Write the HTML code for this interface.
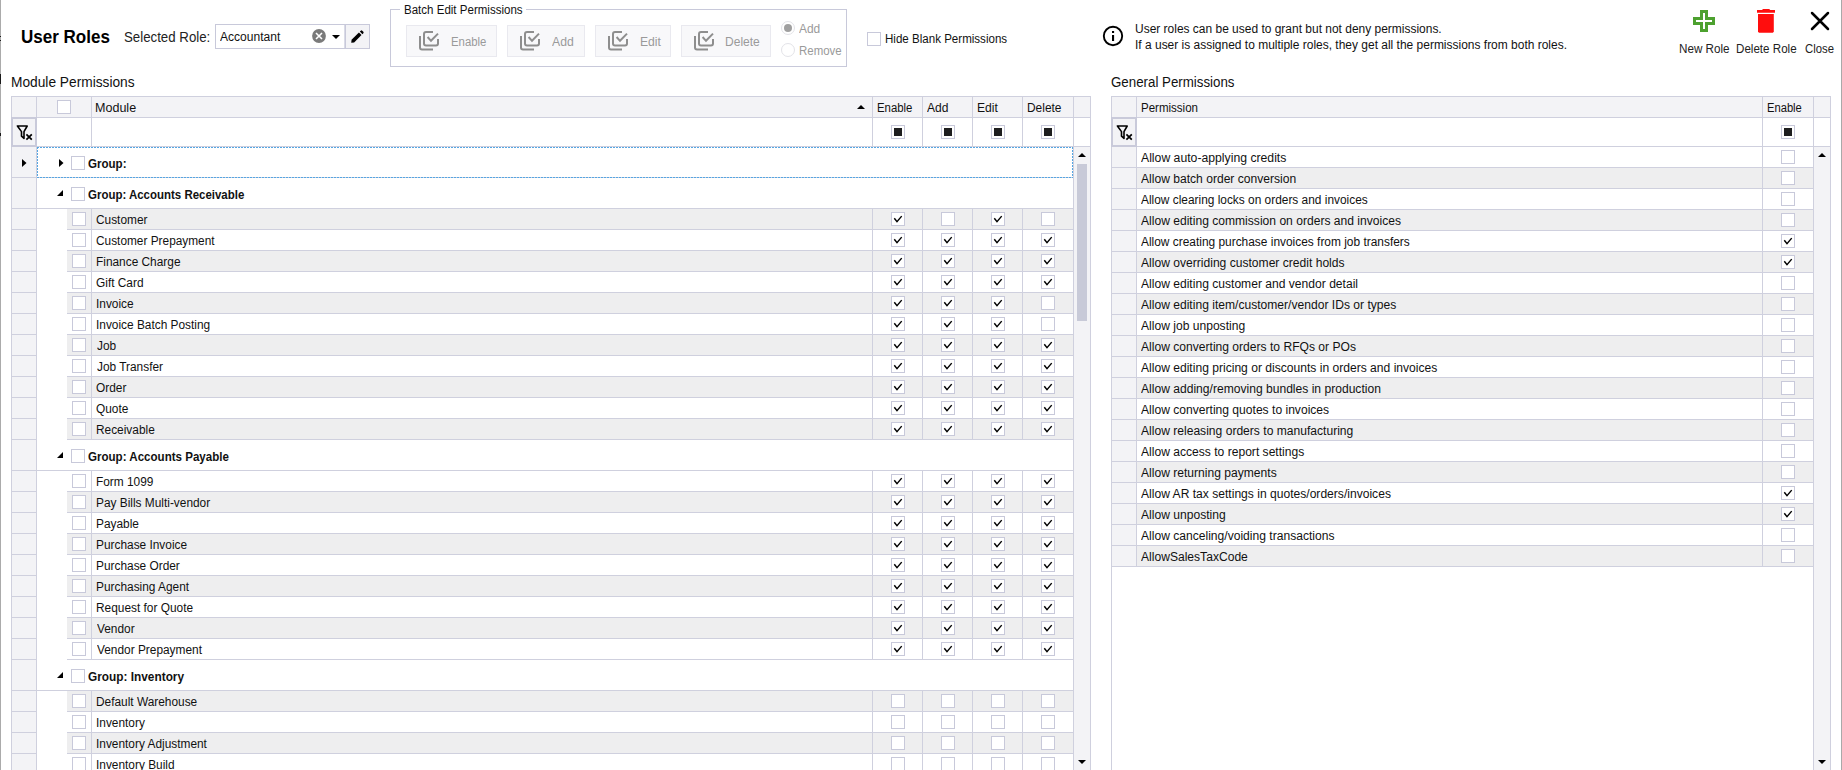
<!DOCTYPE html>
<html><head><meta charset="utf-8"><title>User Roles</title>
<style>
html,body{margin:0;padding:0;background:#fff;}
body{width:1842px;height:770px;overflow:hidden;position:relative;font-family:"Liberation Sans",sans-serif;}
div{position:absolute;box-sizing:content-box;}
.t{white-space:nowrap;line-height:1;transform-origin:0 0;}
svg{display:block;}
</style></head><body>
<div style="left:0px;top:0px;width:1px;height:770px;background:#ABABAB"></div>
<div style="left:0px;top:36px;width:1px;height:1px;background:#1A1A1A"></div>
<div style="left:0px;top:40px;width:1px;height:1px;background:#1A1A1A"></div>
<div style="left:0px;top:74px;width:1px;height:10px;background:#1A1A1A"></div>
<div style="left:0px;top:133px;width:1px;height:3px;background:#1A1A1A"></div>
<div style="left:1841px;top:0px;width:1px;height:770px;background:#A9A9A9"></div>
<div class="t" style="left:21.05px;top:28px;font-size:18px;font-weight:700;color:#000;transform:scaleX(0.9457);">User Roles</div>
<div class="t" style="left:123.74px;top:31px;font-size:13.8px;font-weight:400;color:#222;transform:scaleX(0.9614);">Selected Role:</div>
<div style="left:215px;top:24px;width:153px;height:23px;border:1px solid #C8C9DA;background:#fff"></div>
<div style="left:345px;top:25px;width:24px;height:23px;background:#F3F3F6"></div>
<div style="left:344px;top:25px;width:1px;height:23px;background:#DADBE7"></div>
<div style="left:345px;top:25px;width:1px;height:23px;background:#C8C9DA"></div>
<div class="t" style="left:220.30px;top:31px;font-size:12.5px;font-weight:400;color:#111;transform:scaleX(0.9645);">Accountant</div>
<svg style="position:absolute;left:311px;top:28px" width="16" height="16"><circle cx="8" cy="8" r="6.9" fill="#7A7A7A"/><path d="M5 5 L11 11 M11 5 L5 11" stroke="#fff" stroke-width="1.6"/></svg>
<svg style="position:absolute;left:332px;top:35px" width="8" height="4"><path d="M0 0 L4.0 4 L8 0 Z" fill="#000"/></svg>
<svg style="position:absolute;left:348px;top:28px" width="20" height="18"><g transform="translate(3.2 14.8) scale(0.92) translate(-3.2 -14.8)"><path d="M3.2 14.8 L3.6 11.6 L11.6 3.6 L14.4 6.4 L6.4 14.4 Z" fill="#000"/><path d="M12.6 2.6 L13.6 1.6 Q14.4 0.9 15.2 1.6 L16.4 2.8 Q17.1 3.6 16.4 4.4 L15.4 5.4 Z" fill="#000"/></g></svg>
<div style="left:390px;top:9px;width:455px;height:56px;border:1px solid #C8C9DA"></div>
<div style="left:400px;top:5px;width:126px;height:8px;background:#fff"></div>
<div class="t" style="left:403.68px;top:4px;font-size:12.5px;font-weight:400;color:#111;transform:scaleX(0.9228);">Batch Edit Permissions</div>
<div style="left:406px;top:25px;width:89px;height:30px;border:1px solid #E9E9EF;background:#F8F8FA"></div>
<svg width="22" height="22" style="position:absolute;left:419px;top:31px"><g fill="none" stroke="#8E8E8E" stroke-width="2"><path d="M1 5 V16.5 Q1 18.5 3 18.5 H14"/><path d="M14 1 H7 Q5 1 5 3 V12.5 Q5 14.5 7 14.5 H17 Q19 14.5 19 12.5 V8"/><path d="M8.6 6 L12 9.8 L19 2.6"/></g></svg>
<div class="t" style="left:450.59px;top:36px;font-size:12.5px;font-weight:400;color:#9A9A9A;transform:scaleX(0.9079);">Enable</div>
<div style="left:507px;top:25px;width:76px;height:30px;border:1px solid #E9E9EF;background:#F8F8FA"></div>
<svg width="22" height="22" style="position:absolute;left:520px;top:31px"><g fill="none" stroke="#8E8E8E" stroke-width="2"><path d="M1 5 V16.5 Q1 18.5 3 18.5 H14"/><path d="M14 1 H7 Q5 1 5 3 V12.5 Q5 14.5 7 14.5 H17 Q19 14.5 19 12.5 V8"/><path d="M8.6 6 L12 9.8 L19 2.6"/></g></svg>
<div class="t" style="left:552.00px;top:36px;font-size:12.5px;font-weight:400;color:#9A9A9A;transform:scaleX(0.9773);">Add</div>
<div style="left:595px;top:25px;width:74px;height:30px;border:1px solid #E9E9EF;background:#F8F8FA"></div>
<svg width="22" height="22" style="position:absolute;left:608px;top:31px"><g fill="none" stroke="#8E8E8E" stroke-width="2"><path d="M1 5 V16.5 Q1 18.5 3 18.5 H14"/><path d="M14 1 H7 Q5 1 5 3 V12.5 Q5 14.5 7 14.5 H17 Q19 14.5 19 12.5 V8"/><path d="M8.6 6 L12 9.8 L19 2.6"/></g></svg>
<div class="t" style="left:639.63px;top:36px;font-size:12.5px;font-weight:400;color:#9A9A9A;transform:scaleX(0.9700);">Edit</div>
<div style="left:681px;top:25px;width:88px;height:30px;border:1px solid #E9E9EF;background:#F8F8FA"></div>
<svg width="22" height="22" style="position:absolute;left:694px;top:31px"><g fill="none" stroke="#8E8E8E" stroke-width="2"><path d="M1 5 V16.5 Q1 18.5 3 18.5 H14"/><path d="M14 1 H7 Q5 1 5 3 V12.5 Q5 14.5 7 14.5 H17 Q19 14.5 19 12.5 V8"/><path d="M8.6 6 L12 9.8 L19 2.6"/></g></svg>
<div class="t" style="left:725.34px;top:36px;font-size:12.5px;font-weight:400;color:#9A9A9A;transform:scaleX(0.9629);">Delete</div>
<div style="left:781px;top:21px;width:12px;height:12px;border:1px solid #E3E3E8;border-radius:50%;background:#fff"><div style="left:2px;top:2px;width:8px;height:8px;border-radius:50%;background:#A0A0A0"></div></div>
<div style="left:781px;top:43px;width:12px;height:12px;border:1px solid #E3E3E8;border-radius:50%;background:#fff"></div>
<div class="t" style="left:799.30px;top:23px;font-size:12.5px;font-weight:400;color:#9A9A9A;transform:scaleX(0.9545);">Add</div>
<div class="t" style="left:798.88px;top:45px;font-size:12.5px;font-weight:400;color:#9A9A9A;transform:scaleX(0.9156);">Remove</div>
<div style="left:867px;top:32px;width:12px;height:12px;border:1px solid #C8C9DA;background:#fff"></div>
<div class="t" style="left:884.67px;top:33px;font-size:12.5px;font-weight:400;color:#111;transform:scaleX(0.9252);">Hide Blank Permissions</div>
<svg style="position:absolute;left:1102px;top:25px" width="22" height="22"><circle cx="11" cy="11" r="9.2" fill="none" stroke="#000" stroke-width="1.9"/><rect x="10" y="10" width="2.1" height="6" fill="#000"/><rect x="10" y="6" width="2.1" height="2" fill="#000"/></svg>
<div class="t" style="left:1134.84px;top:23px;font-size:12.5px;font-weight:400;color:#111;transform:scaleX(0.9575);">User roles can be used to grant but not deny permissions.</div>
<div class="t" style="left:1134.84px;top:39px;font-size:12.5px;font-weight:400;color:#111;transform:scaleX(0.9581);">If a user is assigned to multiple roles, they get all the permissions from both roles.</div>
<svg style="position:absolute;left:1692px;top:9px" width="24" height="24"><path d="M9.5 2.5 H14.5 V9.5 H21.5 V14.5 H14.5 V21.5 H9.5 V14.5 H2.5 V9.5 H9.5 Z" fill="#fff" stroke="#4DA12F" stroke-width="3"/></svg>
<svg style="position:absolute;left:1755px;top:7px" width="22" height="28"><path d="M2 2.9 H7 L8 1.9 H14.2 L15.2 2.9 H20 V5.8 H2 Z" fill="#FF0D0D"/><path d="M3 7 H18.8 V24.8 L17.8 25.8 H4 L3 24.8 Z" fill="#FF0D0D"/></svg>
<svg style="position:absolute;left:1809px;top:10px" width="22" height="22"><path d="M3 3 L19 19 M19 3 L3 19" stroke="#000" stroke-width="2.5" stroke-linecap="round"/></svg>
<div class="t" style="left:1678.77px;top:43px;font-size:12.5px;font-weight:400;color:#222;transform:scaleX(0.9340);">New Role</div>
<div class="t" style="left:1735.67px;top:43px;font-size:12.5px;font-weight:400;color:#222;transform:scaleX(0.9281);">Delete Role</div>
<div class="t" style="left:1805.09px;top:43px;font-size:12.5px;font-weight:400;color:#222;transform:scaleX(0.9065);">Close</div>
<div class="t" style="left:11.10px;top:76px;font-size:13.8px;font-weight:400;color:#111;transform:scaleX(0.9951);">Module Permissions</div>
<div class="t" style="left:1110.54px;top:76px;font-size:13.8px;font-weight:400;color:#111;transform:scaleX(0.9646);">General Permissions</div>
<div style="left:11px;top:96px;width:1079px;height:21px;background:#F3F3F6"></div>
<div style="left:11px;top:96px;width:1080px;height:1px;background:#CFD0DE"></div>
<div style="left:11px;top:117px;width:1080px;height:1px;background:#CFD0DE"></div>
<div style="left:36px;top:96px;width:1px;height:51px;background:#CFD0DE"></div>
<div style="left:91px;top:96px;width:1px;height:51px;background:#CFD0DE"></div>
<div style="left:872px;top:96px;width:1px;height:51px;background:#CFD0DE"></div>
<div style="left:922px;top:96px;width:1px;height:51px;background:#CFD0DE"></div>
<div style="left:972px;top:96px;width:1px;height:51px;background:#CFD0DE"></div>
<div style="left:1022px;top:96px;width:1px;height:51px;background:#CFD0DE"></div>
<div style="left:1073px;top:96px;width:1px;height:51px;background:#CFD0DE"></div>
<div style="left:11px;top:96px;width:1px;height:674px;background:#CFD0DE"></div>
<div style="left:1090px;top:96px;width:1px;height:674px;background:#CFD0DE"></div>
<div style="left:57px;top:100px;width:12px;height:12px;border:1px solid #C8C9DA;background:#fff"></div>
<div class="t" style="left:95.40px;top:102px;font-size:12.5px;font-weight:400;color:#111;transform:scaleX(1.0025);">Module</div>
<svg style="position:absolute;left:857px;top:105px" width="8" height="4"><path d="M0 4 L4.0 0 L8 4 Z" fill="#000"/></svg>
<div class="t" style="left:876.59px;top:102px;font-size:12.5px;font-weight:400;color:#111;transform:scaleX(0.9105);">Enable</div>
<div class="t" style="left:927.00px;top:102px;font-size:12.5px;font-weight:400;color:#111;transform:scaleX(0.9636);">Add</div>
<div class="t" style="left:976.83px;top:102px;font-size:12.5px;font-weight:400;color:#111;transform:scaleX(0.9700);">Edit</div>
<div class="t" style="left:1026.75px;top:102px;font-size:12.5px;font-weight:400;color:#111;transform:scaleX(0.9543);">Delete</div>
<div style="left:11px;top:146px;width:1080px;height:1px;background:#CFD0DE"></div>
<div style="left:11px;top:117px;width:22px;height:26px;border:2px solid #C9CADA;background:#F3F3F6"><svg width="22" height="26" style="position:absolute;left:0;top:0"><path d="M4.4 7 H14.2 L11 12.6 V19.4 L8.5 17.2 V12.6 Z" fill="none" stroke="#000" stroke-width="1.6" stroke-linejoin="round"/><path d="M13.4 15.3 L18.8 20.6 M18.8 15.3 L13.4 20.6" stroke="#000" stroke-width="1.7"/></svg></div>
<div style="left:891px;top:125px;width:12px;height:12px;border:1px solid #C8C9DA;background:#fff"><div style="left:2px;top:2px;width:8px;height:8px;background:#1E1E1E"></div></div>
<div style="left:941px;top:125px;width:12px;height:12px;border:1px solid #C8C9DA;background:#fff"><div style="left:2px;top:2px;width:8px;height:8px;background:#1E1E1E"></div></div>
<div style="left:991px;top:125px;width:12px;height:12px;border:1px solid #C8C9DA;background:#fff"><div style="left:2px;top:2px;width:8px;height:8px;background:#1E1E1E"></div></div>
<div style="left:1041px;top:125px;width:12px;height:12px;border:1px solid #C8C9DA;background:#fff"><div style="left:2px;top:2px;width:8px;height:8px;background:#1E1E1E"></div></div>
<div style="left:1074px;top:147px;width:16px;height:623px;background:#F3F3F6"></div>
<svg style="position:absolute;left:1078px;top:153px" width="8" height="4"><path d="M0 4 L4.0 0 L8 4 Z" fill="#000"/></svg>
<div style="left:1077px;top:164px;width:10px;height:157px;background:#C8CAD8"></div>
<svg style="position:absolute;left:1078px;top:760px" width="8" height="4"><path d="M0 0 L4.0 4 L8 0 Z" fill="#000"/></svg>
<div style="left:11px;top:177px;width:26px;height:1px;background:#CFD0DE"></div>
<div style="left:36px;top:177px;width:1037px;height:1px;background:#CFD0DE"></div>
<div style="left:12px;top:147px;width:24px;height:30px;background:#F3F3F6"></div>
<svg style="position:absolute;left:22px;top:159px" width="5" height="8"><path d="M0 0 L4.5 4 L0 8 Z" fill="#000"/></svg>
<svg style="position:absolute;left:59px;top:159px" width="5" height="8"><path d="M0 0 L4.5 4 L0 8 Z" fill="#000"/></svg>
<div style="left:71px;top:156px;width:12px;height:12px;border:1px solid #C8C9DA;background:#fff"></div>
<div class="t" style="left:88.40px;top:158px;font-size:12.5px;font-weight:700;color:#111;transform:scaleX(0.9250);">Group:</div>
<div style="left:11px;top:208px;width:26px;height:1px;background:#CFD0DE"></div>
<div style="left:36px;top:208px;width:1037px;height:1px;background:#CFD0DE"></div>
<div style="left:12px;top:178px;width:24px;height:30px;background:#F3F3F6"></div>
<svg style="position:absolute;left:56px;top:189px" width="8" height="8"><path d="M1 7 L7 7 L7 1 Z" fill="#000"/></svg>
<div style="left:71px;top:187px;width:12px;height:12px;border:1px solid #C8C9DA;background:#fff"></div>
<div class="t" style="left:88.40px;top:189px;font-size:12.5px;font-weight:700;color:#111;transform:scaleX(0.9171);">Group: Accounts Receivable</div>
<div style="left:67px;top:209px;width:1006px;height:20px;background:#EEEEEF"></div>
<div style="left:12px;top:209px;width:24px;height:20px;background:#F3F3F6"></div>
<div style="left:11px;top:229px;width:26px;height:1px;background:#CFD0DE"></div>
<div style="left:67px;top:229px;width:1006px;height:1px;background:#CFD0DE"></div>
<div style="left:91px;top:209px;width:1px;height:21px;background:#CFD0DE"></div>
<div style="left:872px;top:209px;width:1px;height:21px;background:#CFD0DE"></div>
<div style="left:922px;top:209px;width:1px;height:21px;background:#CFD0DE"></div>
<div style="left:972px;top:209px;width:1px;height:21px;background:#CFD0DE"></div>
<div style="left:1022px;top:209px;width:1px;height:21px;background:#CFD0DE"></div>
<div style="left:1073px;top:209px;width:1px;height:21px;background:#CFD0DE"></div>
<div style="left:72px;top:212px;width:12px;height:12px;border:1px solid #C8C9DA;background:#fff"></div>
<div class="t" style="left:95.65px;top:214px;font-size:12.5px;font-weight:400;color:#111;transform:scaleX(0.9500);">Customer</div>
<div style="left:891px;top:212px;width:12px;height:12px;border:1px solid #C8C9DA;background:#fff"><svg width="14" height="14" style="position:absolute;left:-1px;top:-1px"><path d="M3.3 6.2 L6 9.6 L10.7 4.1" fill="none" stroke="#000" stroke-width="1.45"/></svg></div>
<div style="left:941px;top:212px;width:12px;height:12px;border:1px solid #C8C9DA;background:#fff"></div>
<div style="left:991px;top:212px;width:12px;height:12px;border:1px solid #C8C9DA;background:#fff"><svg width="14" height="14" style="position:absolute;left:-1px;top:-1px"><path d="M3.3 6.2 L6 9.6 L10.7 4.1" fill="none" stroke="#000" stroke-width="1.45"/></svg></div>
<div style="left:1041px;top:212px;width:12px;height:12px;border:1px solid #C8C9DA;background:#fff"></div>
<div style="left:12px;top:230px;width:24px;height:20px;background:#F3F3F6"></div>
<div style="left:11px;top:250px;width:26px;height:1px;background:#CFD0DE"></div>
<div style="left:67px;top:250px;width:1006px;height:1px;background:#CFD0DE"></div>
<div style="left:91px;top:230px;width:1px;height:21px;background:#CFD0DE"></div>
<div style="left:872px;top:230px;width:1px;height:21px;background:#CFD0DE"></div>
<div style="left:922px;top:230px;width:1px;height:21px;background:#CFD0DE"></div>
<div style="left:972px;top:230px;width:1px;height:21px;background:#CFD0DE"></div>
<div style="left:1022px;top:230px;width:1px;height:21px;background:#CFD0DE"></div>
<div style="left:1073px;top:230px;width:1px;height:21px;background:#CFD0DE"></div>
<div style="left:72px;top:233px;width:12px;height:12px;border:1px solid #C8C9DA;background:#fff"></div>
<div class="t" style="left:95.65px;top:235px;font-size:12.5px;font-weight:400;color:#111;transform:scaleX(0.9484);">Customer Prepayment</div>
<div style="left:891px;top:233px;width:12px;height:12px;border:1px solid #C8C9DA;background:#fff"><svg width="14" height="14" style="position:absolute;left:-1px;top:-1px"><path d="M3.3 6.2 L6 9.6 L10.7 4.1" fill="none" stroke="#000" stroke-width="1.45"/></svg></div>
<div style="left:941px;top:233px;width:12px;height:12px;border:1px solid #C8C9DA;background:#fff"><svg width="14" height="14" style="position:absolute;left:-1px;top:-1px"><path d="M3.3 6.2 L6 9.6 L10.7 4.1" fill="none" stroke="#000" stroke-width="1.45"/></svg></div>
<div style="left:991px;top:233px;width:12px;height:12px;border:1px solid #C8C9DA;background:#fff"><svg width="14" height="14" style="position:absolute;left:-1px;top:-1px"><path d="M3.3 6.2 L6 9.6 L10.7 4.1" fill="none" stroke="#000" stroke-width="1.45"/></svg></div>
<div style="left:1041px;top:233px;width:12px;height:12px;border:1px solid #C8C9DA;background:#fff"><svg width="14" height="14" style="position:absolute;left:-1px;top:-1px"><path d="M3.3 6.2 L6 9.6 L10.7 4.1" fill="none" stroke="#000" stroke-width="1.45"/></svg></div>
<div style="left:67px;top:251px;width:1006px;height:20px;background:#EEEEEF"></div>
<div style="left:12px;top:251px;width:24px;height:20px;background:#F3F3F6"></div>
<div style="left:11px;top:271px;width:26px;height:1px;background:#CFD0DE"></div>
<div style="left:67px;top:271px;width:1006px;height:1px;background:#CFD0DE"></div>
<div style="left:91px;top:251px;width:1px;height:21px;background:#CFD0DE"></div>
<div style="left:872px;top:251px;width:1px;height:21px;background:#CFD0DE"></div>
<div style="left:922px;top:251px;width:1px;height:21px;background:#CFD0DE"></div>
<div style="left:972px;top:251px;width:1px;height:21px;background:#CFD0DE"></div>
<div style="left:1022px;top:251px;width:1px;height:21px;background:#CFD0DE"></div>
<div style="left:1073px;top:251px;width:1px;height:21px;background:#CFD0DE"></div>
<div style="left:72px;top:254px;width:12px;height:12px;border:1px solid #C8C9DA;background:#fff"></div>
<div class="t" style="left:95.65px;top:256px;font-size:12.5px;font-weight:400;color:#111;transform:scaleX(0.9500);">Finance Charge</div>
<div style="left:891px;top:254px;width:12px;height:12px;border:1px solid #C8C9DA;background:#fff"><svg width="14" height="14" style="position:absolute;left:-1px;top:-1px"><path d="M3.3 6.2 L6 9.6 L10.7 4.1" fill="none" stroke="#000" stroke-width="1.45"/></svg></div>
<div style="left:941px;top:254px;width:12px;height:12px;border:1px solid #C8C9DA;background:#fff"><svg width="14" height="14" style="position:absolute;left:-1px;top:-1px"><path d="M3.3 6.2 L6 9.6 L10.7 4.1" fill="none" stroke="#000" stroke-width="1.45"/></svg></div>
<div style="left:991px;top:254px;width:12px;height:12px;border:1px solid #C8C9DA;background:#fff"><svg width="14" height="14" style="position:absolute;left:-1px;top:-1px"><path d="M3.3 6.2 L6 9.6 L10.7 4.1" fill="none" stroke="#000" stroke-width="1.45"/></svg></div>
<div style="left:1041px;top:254px;width:12px;height:12px;border:1px solid #C8C9DA;background:#fff"><svg width="14" height="14" style="position:absolute;left:-1px;top:-1px"><path d="M3.3 6.2 L6 9.6 L10.7 4.1" fill="none" stroke="#000" stroke-width="1.45"/></svg></div>
<div style="left:12px;top:272px;width:24px;height:20px;background:#F3F3F6"></div>
<div style="left:11px;top:292px;width:26px;height:1px;background:#CFD0DE"></div>
<div style="left:67px;top:292px;width:1006px;height:1px;background:#CFD0DE"></div>
<div style="left:91px;top:272px;width:1px;height:21px;background:#CFD0DE"></div>
<div style="left:872px;top:272px;width:1px;height:21px;background:#CFD0DE"></div>
<div style="left:922px;top:272px;width:1px;height:21px;background:#CFD0DE"></div>
<div style="left:972px;top:272px;width:1px;height:21px;background:#CFD0DE"></div>
<div style="left:1022px;top:272px;width:1px;height:21px;background:#CFD0DE"></div>
<div style="left:1073px;top:272px;width:1px;height:21px;background:#CFD0DE"></div>
<div style="left:72px;top:275px;width:12px;height:12px;border:1px solid #C8C9DA;background:#fff"></div>
<div class="t" style="left:95.65px;top:277px;font-size:12.5px;font-weight:400;color:#111;transform:scaleX(0.9500);">Gift Card</div>
<div style="left:891px;top:275px;width:12px;height:12px;border:1px solid #C8C9DA;background:#fff"><svg width="14" height="14" style="position:absolute;left:-1px;top:-1px"><path d="M3.3 6.2 L6 9.6 L10.7 4.1" fill="none" stroke="#000" stroke-width="1.45"/></svg></div>
<div style="left:941px;top:275px;width:12px;height:12px;border:1px solid #C8C9DA;background:#fff"><svg width="14" height="14" style="position:absolute;left:-1px;top:-1px"><path d="M3.3 6.2 L6 9.6 L10.7 4.1" fill="none" stroke="#000" stroke-width="1.45"/></svg></div>
<div style="left:991px;top:275px;width:12px;height:12px;border:1px solid #C8C9DA;background:#fff"><svg width="14" height="14" style="position:absolute;left:-1px;top:-1px"><path d="M3.3 6.2 L6 9.6 L10.7 4.1" fill="none" stroke="#000" stroke-width="1.45"/></svg></div>
<div style="left:1041px;top:275px;width:12px;height:12px;border:1px solid #C8C9DA;background:#fff"><svg width="14" height="14" style="position:absolute;left:-1px;top:-1px"><path d="M3.3 6.2 L6 9.6 L10.7 4.1" fill="none" stroke="#000" stroke-width="1.45"/></svg></div>
<div style="left:67px;top:293px;width:1006px;height:20px;background:#EEEEEF"></div>
<div style="left:12px;top:293px;width:24px;height:20px;background:#F3F3F6"></div>
<div style="left:11px;top:313px;width:26px;height:1px;background:#CFD0DE"></div>
<div style="left:67px;top:313px;width:1006px;height:1px;background:#CFD0DE"></div>
<div style="left:91px;top:293px;width:1px;height:21px;background:#CFD0DE"></div>
<div style="left:872px;top:293px;width:1px;height:21px;background:#CFD0DE"></div>
<div style="left:922px;top:293px;width:1px;height:21px;background:#CFD0DE"></div>
<div style="left:972px;top:293px;width:1px;height:21px;background:#CFD0DE"></div>
<div style="left:1022px;top:293px;width:1px;height:21px;background:#CFD0DE"></div>
<div style="left:1073px;top:293px;width:1px;height:21px;background:#CFD0DE"></div>
<div style="left:72px;top:296px;width:12px;height:12px;border:1px solid #C8C9DA;background:#fff"></div>
<div class="t" style="left:95.65px;top:298px;font-size:12.5px;font-weight:400;color:#111;transform:scaleX(0.9500);">Invoice</div>
<div style="left:891px;top:296px;width:12px;height:12px;border:1px solid #C8C9DA;background:#fff"><svg width="14" height="14" style="position:absolute;left:-1px;top:-1px"><path d="M3.3 6.2 L6 9.6 L10.7 4.1" fill="none" stroke="#000" stroke-width="1.45"/></svg></div>
<div style="left:941px;top:296px;width:12px;height:12px;border:1px solid #C8C9DA;background:#fff"><svg width="14" height="14" style="position:absolute;left:-1px;top:-1px"><path d="M3.3 6.2 L6 9.6 L10.7 4.1" fill="none" stroke="#000" stroke-width="1.45"/></svg></div>
<div style="left:991px;top:296px;width:12px;height:12px;border:1px solid #C8C9DA;background:#fff"><svg width="14" height="14" style="position:absolute;left:-1px;top:-1px"><path d="M3.3 6.2 L6 9.6 L10.7 4.1" fill="none" stroke="#000" stroke-width="1.45"/></svg></div>
<div style="left:1041px;top:296px;width:12px;height:12px;border:1px solid #C8C9DA;background:#fff"></div>
<div style="left:12px;top:314px;width:24px;height:20px;background:#F3F3F6"></div>
<div style="left:11px;top:334px;width:26px;height:1px;background:#CFD0DE"></div>
<div style="left:67px;top:334px;width:1006px;height:1px;background:#CFD0DE"></div>
<div style="left:91px;top:314px;width:1px;height:21px;background:#CFD0DE"></div>
<div style="left:872px;top:314px;width:1px;height:21px;background:#CFD0DE"></div>
<div style="left:922px;top:314px;width:1px;height:21px;background:#CFD0DE"></div>
<div style="left:972px;top:314px;width:1px;height:21px;background:#CFD0DE"></div>
<div style="left:1022px;top:314px;width:1px;height:21px;background:#CFD0DE"></div>
<div style="left:1073px;top:314px;width:1px;height:21px;background:#CFD0DE"></div>
<div style="left:72px;top:317px;width:12px;height:12px;border:1px solid #C8C9DA;background:#fff"></div>
<div class="t" style="left:95.65px;top:319px;font-size:12.5px;font-weight:400;color:#111;transform:scaleX(0.9500);">Invoice Batch Posting</div>
<div style="left:891px;top:317px;width:12px;height:12px;border:1px solid #C8C9DA;background:#fff"><svg width="14" height="14" style="position:absolute;left:-1px;top:-1px"><path d="M3.3 6.2 L6 9.6 L10.7 4.1" fill="none" stroke="#000" stroke-width="1.45"/></svg></div>
<div style="left:941px;top:317px;width:12px;height:12px;border:1px solid #C8C9DA;background:#fff"><svg width="14" height="14" style="position:absolute;left:-1px;top:-1px"><path d="M3.3 6.2 L6 9.6 L10.7 4.1" fill="none" stroke="#000" stroke-width="1.45"/></svg></div>
<div style="left:991px;top:317px;width:12px;height:12px;border:1px solid #C8C9DA;background:#fff"><svg width="14" height="14" style="position:absolute;left:-1px;top:-1px"><path d="M3.3 6.2 L6 9.6 L10.7 4.1" fill="none" stroke="#000" stroke-width="1.45"/></svg></div>
<div style="left:1041px;top:317px;width:12px;height:12px;border:1px solid #C8C9DA;background:#fff"></div>
<div style="left:67px;top:335px;width:1006px;height:20px;background:#EEEEEF"></div>
<div style="left:12px;top:335px;width:24px;height:20px;background:#F3F3F6"></div>
<div style="left:11px;top:355px;width:26px;height:1px;background:#CFD0DE"></div>
<div style="left:67px;top:355px;width:1006px;height:1px;background:#CFD0DE"></div>
<div style="left:91px;top:335px;width:1px;height:21px;background:#CFD0DE"></div>
<div style="left:872px;top:335px;width:1px;height:21px;background:#CFD0DE"></div>
<div style="left:922px;top:335px;width:1px;height:21px;background:#CFD0DE"></div>
<div style="left:972px;top:335px;width:1px;height:21px;background:#CFD0DE"></div>
<div style="left:1022px;top:335px;width:1px;height:21px;background:#CFD0DE"></div>
<div style="left:1073px;top:335px;width:1px;height:21px;background:#CFD0DE"></div>
<div style="left:72px;top:338px;width:12px;height:12px;border:1px solid #C8C9DA;background:#fff"></div>
<div class="t" style="left:96.60px;top:340px;font-size:12.5px;font-weight:400;color:#111;transform:scaleX(0.9500);">Job</div>
<div style="left:891px;top:338px;width:12px;height:12px;border:1px solid #C8C9DA;background:#fff"><svg width="14" height="14" style="position:absolute;left:-1px;top:-1px"><path d="M3.3 6.2 L6 9.6 L10.7 4.1" fill="none" stroke="#000" stroke-width="1.45"/></svg></div>
<div style="left:941px;top:338px;width:12px;height:12px;border:1px solid #C8C9DA;background:#fff"><svg width="14" height="14" style="position:absolute;left:-1px;top:-1px"><path d="M3.3 6.2 L6 9.6 L10.7 4.1" fill="none" stroke="#000" stroke-width="1.45"/></svg></div>
<div style="left:991px;top:338px;width:12px;height:12px;border:1px solid #C8C9DA;background:#fff"><svg width="14" height="14" style="position:absolute;left:-1px;top:-1px"><path d="M3.3 6.2 L6 9.6 L10.7 4.1" fill="none" stroke="#000" stroke-width="1.45"/></svg></div>
<div style="left:1041px;top:338px;width:12px;height:12px;border:1px solid #C8C9DA;background:#fff"><svg width="14" height="14" style="position:absolute;left:-1px;top:-1px"><path d="M3.3 6.2 L6 9.6 L10.7 4.1" fill="none" stroke="#000" stroke-width="1.45"/></svg></div>
<div style="left:12px;top:356px;width:24px;height:20px;background:#F3F3F6"></div>
<div style="left:11px;top:376px;width:26px;height:1px;background:#CFD0DE"></div>
<div style="left:67px;top:376px;width:1006px;height:1px;background:#CFD0DE"></div>
<div style="left:91px;top:356px;width:1px;height:21px;background:#CFD0DE"></div>
<div style="left:872px;top:356px;width:1px;height:21px;background:#CFD0DE"></div>
<div style="left:922px;top:356px;width:1px;height:21px;background:#CFD0DE"></div>
<div style="left:972px;top:356px;width:1px;height:21px;background:#CFD0DE"></div>
<div style="left:1022px;top:356px;width:1px;height:21px;background:#CFD0DE"></div>
<div style="left:1073px;top:356px;width:1px;height:21px;background:#CFD0DE"></div>
<div style="left:72px;top:359px;width:12px;height:12px;border:1px solid #C8C9DA;background:#fff"></div>
<div class="t" style="left:96.60px;top:361px;font-size:12.5px;font-weight:400;color:#111;transform:scaleX(0.9500);">Job Transfer</div>
<div style="left:891px;top:359px;width:12px;height:12px;border:1px solid #C8C9DA;background:#fff"><svg width="14" height="14" style="position:absolute;left:-1px;top:-1px"><path d="M3.3 6.2 L6 9.6 L10.7 4.1" fill="none" stroke="#000" stroke-width="1.45"/></svg></div>
<div style="left:941px;top:359px;width:12px;height:12px;border:1px solid #C8C9DA;background:#fff"><svg width="14" height="14" style="position:absolute;left:-1px;top:-1px"><path d="M3.3 6.2 L6 9.6 L10.7 4.1" fill="none" stroke="#000" stroke-width="1.45"/></svg></div>
<div style="left:991px;top:359px;width:12px;height:12px;border:1px solid #C8C9DA;background:#fff"><svg width="14" height="14" style="position:absolute;left:-1px;top:-1px"><path d="M3.3 6.2 L6 9.6 L10.7 4.1" fill="none" stroke="#000" stroke-width="1.45"/></svg></div>
<div style="left:1041px;top:359px;width:12px;height:12px;border:1px solid #C8C9DA;background:#fff"><svg width="14" height="14" style="position:absolute;left:-1px;top:-1px"><path d="M3.3 6.2 L6 9.6 L10.7 4.1" fill="none" stroke="#000" stroke-width="1.45"/></svg></div>
<div style="left:67px;top:377px;width:1006px;height:20px;background:#EEEEEF"></div>
<div style="left:12px;top:377px;width:24px;height:20px;background:#F3F3F6"></div>
<div style="left:11px;top:397px;width:26px;height:1px;background:#CFD0DE"></div>
<div style="left:67px;top:397px;width:1006px;height:1px;background:#CFD0DE"></div>
<div style="left:91px;top:377px;width:1px;height:21px;background:#CFD0DE"></div>
<div style="left:872px;top:377px;width:1px;height:21px;background:#CFD0DE"></div>
<div style="left:922px;top:377px;width:1px;height:21px;background:#CFD0DE"></div>
<div style="left:972px;top:377px;width:1px;height:21px;background:#CFD0DE"></div>
<div style="left:1022px;top:377px;width:1px;height:21px;background:#CFD0DE"></div>
<div style="left:1073px;top:377px;width:1px;height:21px;background:#CFD0DE"></div>
<div style="left:72px;top:380px;width:12px;height:12px;border:1px solid #C8C9DA;background:#fff"></div>
<div class="t" style="left:95.65px;top:382px;font-size:12.5px;font-weight:400;color:#111;transform:scaleX(0.9500);">Order</div>
<div style="left:891px;top:380px;width:12px;height:12px;border:1px solid #C8C9DA;background:#fff"><svg width="14" height="14" style="position:absolute;left:-1px;top:-1px"><path d="M3.3 6.2 L6 9.6 L10.7 4.1" fill="none" stroke="#000" stroke-width="1.45"/></svg></div>
<div style="left:941px;top:380px;width:12px;height:12px;border:1px solid #C8C9DA;background:#fff"><svg width="14" height="14" style="position:absolute;left:-1px;top:-1px"><path d="M3.3 6.2 L6 9.6 L10.7 4.1" fill="none" stroke="#000" stroke-width="1.45"/></svg></div>
<div style="left:991px;top:380px;width:12px;height:12px;border:1px solid #C8C9DA;background:#fff"><svg width="14" height="14" style="position:absolute;left:-1px;top:-1px"><path d="M3.3 6.2 L6 9.6 L10.7 4.1" fill="none" stroke="#000" stroke-width="1.45"/></svg></div>
<div style="left:1041px;top:380px;width:12px;height:12px;border:1px solid #C8C9DA;background:#fff"><svg width="14" height="14" style="position:absolute;left:-1px;top:-1px"><path d="M3.3 6.2 L6 9.6 L10.7 4.1" fill="none" stroke="#000" stroke-width="1.45"/></svg></div>
<div style="left:12px;top:398px;width:24px;height:20px;background:#F3F3F6"></div>
<div style="left:11px;top:418px;width:26px;height:1px;background:#CFD0DE"></div>
<div style="left:67px;top:418px;width:1006px;height:1px;background:#CFD0DE"></div>
<div style="left:91px;top:398px;width:1px;height:21px;background:#CFD0DE"></div>
<div style="left:872px;top:398px;width:1px;height:21px;background:#CFD0DE"></div>
<div style="left:922px;top:398px;width:1px;height:21px;background:#CFD0DE"></div>
<div style="left:972px;top:398px;width:1px;height:21px;background:#CFD0DE"></div>
<div style="left:1022px;top:398px;width:1px;height:21px;background:#CFD0DE"></div>
<div style="left:1073px;top:398px;width:1px;height:21px;background:#CFD0DE"></div>
<div style="left:72px;top:401px;width:12px;height:12px;border:1px solid #C8C9DA;background:#fff"></div>
<div class="t" style="left:95.65px;top:403px;font-size:12.5px;font-weight:400;color:#111;transform:scaleX(0.9500);">Quote</div>
<div style="left:891px;top:401px;width:12px;height:12px;border:1px solid #C8C9DA;background:#fff"><svg width="14" height="14" style="position:absolute;left:-1px;top:-1px"><path d="M3.3 6.2 L6 9.6 L10.7 4.1" fill="none" stroke="#000" stroke-width="1.45"/></svg></div>
<div style="left:941px;top:401px;width:12px;height:12px;border:1px solid #C8C9DA;background:#fff"><svg width="14" height="14" style="position:absolute;left:-1px;top:-1px"><path d="M3.3 6.2 L6 9.6 L10.7 4.1" fill="none" stroke="#000" stroke-width="1.45"/></svg></div>
<div style="left:991px;top:401px;width:12px;height:12px;border:1px solid #C8C9DA;background:#fff"><svg width="14" height="14" style="position:absolute;left:-1px;top:-1px"><path d="M3.3 6.2 L6 9.6 L10.7 4.1" fill="none" stroke="#000" stroke-width="1.45"/></svg></div>
<div style="left:1041px;top:401px;width:12px;height:12px;border:1px solid #C8C9DA;background:#fff"><svg width="14" height="14" style="position:absolute;left:-1px;top:-1px"><path d="M3.3 6.2 L6 9.6 L10.7 4.1" fill="none" stroke="#000" stroke-width="1.45"/></svg></div>
<div style="left:67px;top:419px;width:1006px;height:20px;background:#EEEEEF"></div>
<div style="left:12px;top:419px;width:24px;height:20px;background:#F3F3F6"></div>
<div style="left:11px;top:439px;width:26px;height:1px;background:#CFD0DE"></div>
<div style="left:67px;top:439px;width:1006px;height:1px;background:#CFD0DE"></div>
<div style="left:91px;top:419px;width:1px;height:21px;background:#CFD0DE"></div>
<div style="left:872px;top:419px;width:1px;height:21px;background:#CFD0DE"></div>
<div style="left:922px;top:419px;width:1px;height:21px;background:#CFD0DE"></div>
<div style="left:972px;top:419px;width:1px;height:21px;background:#CFD0DE"></div>
<div style="left:1022px;top:419px;width:1px;height:21px;background:#CFD0DE"></div>
<div style="left:1073px;top:419px;width:1px;height:21px;background:#CFD0DE"></div>
<div style="left:72px;top:422px;width:12px;height:12px;border:1px solid #C8C9DA;background:#fff"></div>
<div class="t" style="left:95.65px;top:424px;font-size:12.5px;font-weight:400;color:#111;transform:scaleX(0.9500);">Receivable</div>
<div style="left:891px;top:422px;width:12px;height:12px;border:1px solid #C8C9DA;background:#fff"><svg width="14" height="14" style="position:absolute;left:-1px;top:-1px"><path d="M3.3 6.2 L6 9.6 L10.7 4.1" fill="none" stroke="#000" stroke-width="1.45"/></svg></div>
<div style="left:941px;top:422px;width:12px;height:12px;border:1px solid #C8C9DA;background:#fff"><svg width="14" height="14" style="position:absolute;left:-1px;top:-1px"><path d="M3.3 6.2 L6 9.6 L10.7 4.1" fill="none" stroke="#000" stroke-width="1.45"/></svg></div>
<div style="left:991px;top:422px;width:12px;height:12px;border:1px solid #C8C9DA;background:#fff"><svg width="14" height="14" style="position:absolute;left:-1px;top:-1px"><path d="M3.3 6.2 L6 9.6 L10.7 4.1" fill="none" stroke="#000" stroke-width="1.45"/></svg></div>
<div style="left:1041px;top:422px;width:12px;height:12px;border:1px solid #C8C9DA;background:#fff"><svg width="14" height="14" style="position:absolute;left:-1px;top:-1px"><path d="M3.3 6.2 L6 9.6 L10.7 4.1" fill="none" stroke="#000" stroke-width="1.45"/></svg></div>
<div style="left:11px;top:470px;width:26px;height:1px;background:#CFD0DE"></div>
<div style="left:36px;top:470px;width:1037px;height:1px;background:#CFD0DE"></div>
<div style="left:12px;top:440px;width:24px;height:30px;background:#F3F3F6"></div>
<svg style="position:absolute;left:56px;top:451px" width="8" height="8"><path d="M1 7 L7 7 L7 1 Z" fill="#000"/></svg>
<div style="left:71px;top:449px;width:12px;height:12px;border:1px solid #C8C9DA;background:#fff"></div>
<div class="t" style="left:88.40px;top:451px;font-size:12.5px;font-weight:700;color:#111;transform:scaleX(0.9250);">Group: Accounts Payable</div>
<div style="left:12px;top:471px;width:24px;height:20px;background:#F3F3F6"></div>
<div style="left:11px;top:491px;width:26px;height:1px;background:#CFD0DE"></div>
<div style="left:67px;top:491px;width:1006px;height:1px;background:#CFD0DE"></div>
<div style="left:91px;top:471px;width:1px;height:21px;background:#CFD0DE"></div>
<div style="left:872px;top:471px;width:1px;height:21px;background:#CFD0DE"></div>
<div style="left:922px;top:471px;width:1px;height:21px;background:#CFD0DE"></div>
<div style="left:972px;top:471px;width:1px;height:21px;background:#CFD0DE"></div>
<div style="left:1022px;top:471px;width:1px;height:21px;background:#CFD0DE"></div>
<div style="left:1073px;top:471px;width:1px;height:21px;background:#CFD0DE"></div>
<div style="left:72px;top:474px;width:12px;height:12px;border:1px solid #C8C9DA;background:#fff"></div>
<div class="t" style="left:95.65px;top:476px;font-size:12.5px;font-weight:400;color:#111;transform:scaleX(0.9500);">Form 1099</div>
<div style="left:891px;top:474px;width:12px;height:12px;border:1px solid #C8C9DA;background:#fff"><svg width="14" height="14" style="position:absolute;left:-1px;top:-1px"><path d="M3.3 6.2 L6 9.6 L10.7 4.1" fill="none" stroke="#000" stroke-width="1.45"/></svg></div>
<div style="left:941px;top:474px;width:12px;height:12px;border:1px solid #C8C9DA;background:#fff"><svg width="14" height="14" style="position:absolute;left:-1px;top:-1px"><path d="M3.3 6.2 L6 9.6 L10.7 4.1" fill="none" stroke="#000" stroke-width="1.45"/></svg></div>
<div style="left:991px;top:474px;width:12px;height:12px;border:1px solid #C8C9DA;background:#fff"><svg width="14" height="14" style="position:absolute;left:-1px;top:-1px"><path d="M3.3 6.2 L6 9.6 L10.7 4.1" fill="none" stroke="#000" stroke-width="1.45"/></svg></div>
<div style="left:1041px;top:474px;width:12px;height:12px;border:1px solid #C8C9DA;background:#fff"><svg width="14" height="14" style="position:absolute;left:-1px;top:-1px"><path d="M3.3 6.2 L6 9.6 L10.7 4.1" fill="none" stroke="#000" stroke-width="1.45"/></svg></div>
<div style="left:67px;top:492px;width:1006px;height:20px;background:#EEEEEF"></div>
<div style="left:12px;top:492px;width:24px;height:20px;background:#F3F3F6"></div>
<div style="left:11px;top:512px;width:26px;height:1px;background:#CFD0DE"></div>
<div style="left:67px;top:512px;width:1006px;height:1px;background:#CFD0DE"></div>
<div style="left:91px;top:492px;width:1px;height:21px;background:#CFD0DE"></div>
<div style="left:872px;top:492px;width:1px;height:21px;background:#CFD0DE"></div>
<div style="left:922px;top:492px;width:1px;height:21px;background:#CFD0DE"></div>
<div style="left:972px;top:492px;width:1px;height:21px;background:#CFD0DE"></div>
<div style="left:1022px;top:492px;width:1px;height:21px;background:#CFD0DE"></div>
<div style="left:1073px;top:492px;width:1px;height:21px;background:#CFD0DE"></div>
<div style="left:72px;top:495px;width:12px;height:12px;border:1px solid #C8C9DA;background:#fff"></div>
<div class="t" style="left:95.65px;top:497px;font-size:12.5px;font-weight:400;color:#111;transform:scaleX(0.9500);">Pay Bills Multi-vendor</div>
<div style="left:891px;top:495px;width:12px;height:12px;border:1px solid #C8C9DA;background:#fff"><svg width="14" height="14" style="position:absolute;left:-1px;top:-1px"><path d="M3.3 6.2 L6 9.6 L10.7 4.1" fill="none" stroke="#000" stroke-width="1.45"/></svg></div>
<div style="left:941px;top:495px;width:12px;height:12px;border:1px solid #C8C9DA;background:#fff"><svg width="14" height="14" style="position:absolute;left:-1px;top:-1px"><path d="M3.3 6.2 L6 9.6 L10.7 4.1" fill="none" stroke="#000" stroke-width="1.45"/></svg></div>
<div style="left:991px;top:495px;width:12px;height:12px;border:1px solid #C8C9DA;background:#fff"><svg width="14" height="14" style="position:absolute;left:-1px;top:-1px"><path d="M3.3 6.2 L6 9.6 L10.7 4.1" fill="none" stroke="#000" stroke-width="1.45"/></svg></div>
<div style="left:1041px;top:495px;width:12px;height:12px;border:1px solid #C8C9DA;background:#fff"><svg width="14" height="14" style="position:absolute;left:-1px;top:-1px"><path d="M3.3 6.2 L6 9.6 L10.7 4.1" fill="none" stroke="#000" stroke-width="1.45"/></svg></div>
<div style="left:12px;top:513px;width:24px;height:20px;background:#F3F3F6"></div>
<div style="left:11px;top:533px;width:26px;height:1px;background:#CFD0DE"></div>
<div style="left:67px;top:533px;width:1006px;height:1px;background:#CFD0DE"></div>
<div style="left:91px;top:513px;width:1px;height:21px;background:#CFD0DE"></div>
<div style="left:872px;top:513px;width:1px;height:21px;background:#CFD0DE"></div>
<div style="left:922px;top:513px;width:1px;height:21px;background:#CFD0DE"></div>
<div style="left:972px;top:513px;width:1px;height:21px;background:#CFD0DE"></div>
<div style="left:1022px;top:513px;width:1px;height:21px;background:#CFD0DE"></div>
<div style="left:1073px;top:513px;width:1px;height:21px;background:#CFD0DE"></div>
<div style="left:72px;top:516px;width:12px;height:12px;border:1px solid #C8C9DA;background:#fff"></div>
<div class="t" style="left:95.65px;top:518px;font-size:12.5px;font-weight:400;color:#111;transform:scaleX(0.9500);">Payable</div>
<div style="left:891px;top:516px;width:12px;height:12px;border:1px solid #C8C9DA;background:#fff"><svg width="14" height="14" style="position:absolute;left:-1px;top:-1px"><path d="M3.3 6.2 L6 9.6 L10.7 4.1" fill="none" stroke="#000" stroke-width="1.45"/></svg></div>
<div style="left:941px;top:516px;width:12px;height:12px;border:1px solid #C8C9DA;background:#fff"><svg width="14" height="14" style="position:absolute;left:-1px;top:-1px"><path d="M3.3 6.2 L6 9.6 L10.7 4.1" fill="none" stroke="#000" stroke-width="1.45"/></svg></div>
<div style="left:991px;top:516px;width:12px;height:12px;border:1px solid #C8C9DA;background:#fff"><svg width="14" height="14" style="position:absolute;left:-1px;top:-1px"><path d="M3.3 6.2 L6 9.6 L10.7 4.1" fill="none" stroke="#000" stroke-width="1.45"/></svg></div>
<div style="left:1041px;top:516px;width:12px;height:12px;border:1px solid #C8C9DA;background:#fff"><svg width="14" height="14" style="position:absolute;left:-1px;top:-1px"><path d="M3.3 6.2 L6 9.6 L10.7 4.1" fill="none" stroke="#000" stroke-width="1.45"/></svg></div>
<div style="left:67px;top:534px;width:1006px;height:20px;background:#EEEEEF"></div>
<div style="left:12px;top:534px;width:24px;height:20px;background:#F3F3F6"></div>
<div style="left:11px;top:554px;width:26px;height:1px;background:#CFD0DE"></div>
<div style="left:67px;top:554px;width:1006px;height:1px;background:#CFD0DE"></div>
<div style="left:91px;top:534px;width:1px;height:21px;background:#CFD0DE"></div>
<div style="left:872px;top:534px;width:1px;height:21px;background:#CFD0DE"></div>
<div style="left:922px;top:534px;width:1px;height:21px;background:#CFD0DE"></div>
<div style="left:972px;top:534px;width:1px;height:21px;background:#CFD0DE"></div>
<div style="left:1022px;top:534px;width:1px;height:21px;background:#CFD0DE"></div>
<div style="left:1073px;top:534px;width:1px;height:21px;background:#CFD0DE"></div>
<div style="left:72px;top:537px;width:12px;height:12px;border:1px solid #C8C9DA;background:#fff"></div>
<div class="t" style="left:95.65px;top:539px;font-size:12.5px;font-weight:400;color:#111;transform:scaleX(0.9500);">Purchase Invoice</div>
<div style="left:891px;top:537px;width:12px;height:12px;border:1px solid #C8C9DA;background:#fff"><svg width="14" height="14" style="position:absolute;left:-1px;top:-1px"><path d="M3.3 6.2 L6 9.6 L10.7 4.1" fill="none" stroke="#000" stroke-width="1.45"/></svg></div>
<div style="left:941px;top:537px;width:12px;height:12px;border:1px solid #C8C9DA;background:#fff"><svg width="14" height="14" style="position:absolute;left:-1px;top:-1px"><path d="M3.3 6.2 L6 9.6 L10.7 4.1" fill="none" stroke="#000" stroke-width="1.45"/></svg></div>
<div style="left:991px;top:537px;width:12px;height:12px;border:1px solid #C8C9DA;background:#fff"><svg width="14" height="14" style="position:absolute;left:-1px;top:-1px"><path d="M3.3 6.2 L6 9.6 L10.7 4.1" fill="none" stroke="#000" stroke-width="1.45"/></svg></div>
<div style="left:1041px;top:537px;width:12px;height:12px;border:1px solid #C8C9DA;background:#fff"><svg width="14" height="14" style="position:absolute;left:-1px;top:-1px"><path d="M3.3 6.2 L6 9.6 L10.7 4.1" fill="none" stroke="#000" stroke-width="1.45"/></svg></div>
<div style="left:12px;top:555px;width:24px;height:20px;background:#F3F3F6"></div>
<div style="left:11px;top:575px;width:26px;height:1px;background:#CFD0DE"></div>
<div style="left:67px;top:575px;width:1006px;height:1px;background:#CFD0DE"></div>
<div style="left:91px;top:555px;width:1px;height:21px;background:#CFD0DE"></div>
<div style="left:872px;top:555px;width:1px;height:21px;background:#CFD0DE"></div>
<div style="left:922px;top:555px;width:1px;height:21px;background:#CFD0DE"></div>
<div style="left:972px;top:555px;width:1px;height:21px;background:#CFD0DE"></div>
<div style="left:1022px;top:555px;width:1px;height:21px;background:#CFD0DE"></div>
<div style="left:1073px;top:555px;width:1px;height:21px;background:#CFD0DE"></div>
<div style="left:72px;top:558px;width:12px;height:12px;border:1px solid #C8C9DA;background:#fff"></div>
<div class="t" style="left:95.65px;top:560px;font-size:12.5px;font-weight:400;color:#111;transform:scaleX(0.9500);">Purchase Order</div>
<div style="left:891px;top:558px;width:12px;height:12px;border:1px solid #C8C9DA;background:#fff"><svg width="14" height="14" style="position:absolute;left:-1px;top:-1px"><path d="M3.3 6.2 L6 9.6 L10.7 4.1" fill="none" stroke="#000" stroke-width="1.45"/></svg></div>
<div style="left:941px;top:558px;width:12px;height:12px;border:1px solid #C8C9DA;background:#fff"><svg width="14" height="14" style="position:absolute;left:-1px;top:-1px"><path d="M3.3 6.2 L6 9.6 L10.7 4.1" fill="none" stroke="#000" stroke-width="1.45"/></svg></div>
<div style="left:991px;top:558px;width:12px;height:12px;border:1px solid #C8C9DA;background:#fff"><svg width="14" height="14" style="position:absolute;left:-1px;top:-1px"><path d="M3.3 6.2 L6 9.6 L10.7 4.1" fill="none" stroke="#000" stroke-width="1.45"/></svg></div>
<div style="left:1041px;top:558px;width:12px;height:12px;border:1px solid #C8C9DA;background:#fff"><svg width="14" height="14" style="position:absolute;left:-1px;top:-1px"><path d="M3.3 6.2 L6 9.6 L10.7 4.1" fill="none" stroke="#000" stroke-width="1.45"/></svg></div>
<div style="left:67px;top:576px;width:1006px;height:20px;background:#EEEEEF"></div>
<div style="left:12px;top:576px;width:24px;height:20px;background:#F3F3F6"></div>
<div style="left:11px;top:596px;width:26px;height:1px;background:#CFD0DE"></div>
<div style="left:67px;top:596px;width:1006px;height:1px;background:#CFD0DE"></div>
<div style="left:91px;top:576px;width:1px;height:21px;background:#CFD0DE"></div>
<div style="left:872px;top:576px;width:1px;height:21px;background:#CFD0DE"></div>
<div style="left:922px;top:576px;width:1px;height:21px;background:#CFD0DE"></div>
<div style="left:972px;top:576px;width:1px;height:21px;background:#CFD0DE"></div>
<div style="left:1022px;top:576px;width:1px;height:21px;background:#CFD0DE"></div>
<div style="left:1073px;top:576px;width:1px;height:21px;background:#CFD0DE"></div>
<div style="left:72px;top:579px;width:12px;height:12px;border:1px solid #C8C9DA;background:#fff"></div>
<div class="t" style="left:95.65px;top:581px;font-size:12.5px;font-weight:400;color:#111;transform:scaleX(0.9500);">Purchasing Agent</div>
<div style="left:891px;top:579px;width:12px;height:12px;border:1px solid #C8C9DA;background:#fff"><svg width="14" height="14" style="position:absolute;left:-1px;top:-1px"><path d="M3.3 6.2 L6 9.6 L10.7 4.1" fill="none" stroke="#000" stroke-width="1.45"/></svg></div>
<div style="left:941px;top:579px;width:12px;height:12px;border:1px solid #C8C9DA;background:#fff"><svg width="14" height="14" style="position:absolute;left:-1px;top:-1px"><path d="M3.3 6.2 L6 9.6 L10.7 4.1" fill="none" stroke="#000" stroke-width="1.45"/></svg></div>
<div style="left:991px;top:579px;width:12px;height:12px;border:1px solid #C8C9DA;background:#fff"><svg width="14" height="14" style="position:absolute;left:-1px;top:-1px"><path d="M3.3 6.2 L6 9.6 L10.7 4.1" fill="none" stroke="#000" stroke-width="1.45"/></svg></div>
<div style="left:1041px;top:579px;width:12px;height:12px;border:1px solid #C8C9DA;background:#fff"><svg width="14" height="14" style="position:absolute;left:-1px;top:-1px"><path d="M3.3 6.2 L6 9.6 L10.7 4.1" fill="none" stroke="#000" stroke-width="1.45"/></svg></div>
<div style="left:12px;top:597px;width:24px;height:20px;background:#F3F3F6"></div>
<div style="left:11px;top:617px;width:26px;height:1px;background:#CFD0DE"></div>
<div style="left:67px;top:617px;width:1006px;height:1px;background:#CFD0DE"></div>
<div style="left:91px;top:597px;width:1px;height:21px;background:#CFD0DE"></div>
<div style="left:872px;top:597px;width:1px;height:21px;background:#CFD0DE"></div>
<div style="left:922px;top:597px;width:1px;height:21px;background:#CFD0DE"></div>
<div style="left:972px;top:597px;width:1px;height:21px;background:#CFD0DE"></div>
<div style="left:1022px;top:597px;width:1px;height:21px;background:#CFD0DE"></div>
<div style="left:1073px;top:597px;width:1px;height:21px;background:#CFD0DE"></div>
<div style="left:72px;top:600px;width:12px;height:12px;border:1px solid #C8C9DA;background:#fff"></div>
<div class="t" style="left:95.65px;top:602px;font-size:12.5px;font-weight:400;color:#111;transform:scaleX(0.9500);">Request for Quote</div>
<div style="left:891px;top:600px;width:12px;height:12px;border:1px solid #C8C9DA;background:#fff"><svg width="14" height="14" style="position:absolute;left:-1px;top:-1px"><path d="M3.3 6.2 L6 9.6 L10.7 4.1" fill="none" stroke="#000" stroke-width="1.45"/></svg></div>
<div style="left:941px;top:600px;width:12px;height:12px;border:1px solid #C8C9DA;background:#fff"><svg width="14" height="14" style="position:absolute;left:-1px;top:-1px"><path d="M3.3 6.2 L6 9.6 L10.7 4.1" fill="none" stroke="#000" stroke-width="1.45"/></svg></div>
<div style="left:991px;top:600px;width:12px;height:12px;border:1px solid #C8C9DA;background:#fff"><svg width="14" height="14" style="position:absolute;left:-1px;top:-1px"><path d="M3.3 6.2 L6 9.6 L10.7 4.1" fill="none" stroke="#000" stroke-width="1.45"/></svg></div>
<div style="left:1041px;top:600px;width:12px;height:12px;border:1px solid #C8C9DA;background:#fff"><svg width="14" height="14" style="position:absolute;left:-1px;top:-1px"><path d="M3.3 6.2 L6 9.6 L10.7 4.1" fill="none" stroke="#000" stroke-width="1.45"/></svg></div>
<div style="left:67px;top:618px;width:1006px;height:20px;background:#EEEEEF"></div>
<div style="left:12px;top:618px;width:24px;height:20px;background:#F3F3F6"></div>
<div style="left:11px;top:638px;width:26px;height:1px;background:#CFD0DE"></div>
<div style="left:67px;top:638px;width:1006px;height:1px;background:#CFD0DE"></div>
<div style="left:91px;top:618px;width:1px;height:21px;background:#CFD0DE"></div>
<div style="left:872px;top:618px;width:1px;height:21px;background:#CFD0DE"></div>
<div style="left:922px;top:618px;width:1px;height:21px;background:#CFD0DE"></div>
<div style="left:972px;top:618px;width:1px;height:21px;background:#CFD0DE"></div>
<div style="left:1022px;top:618px;width:1px;height:21px;background:#CFD0DE"></div>
<div style="left:1073px;top:618px;width:1px;height:21px;background:#CFD0DE"></div>
<div style="left:72px;top:621px;width:12px;height:12px;border:1px solid #C8C9DA;background:#fff"></div>
<div class="t" style="left:96.60px;top:623px;font-size:12.5px;font-weight:400;color:#111;transform:scaleX(0.9500);">Vendor</div>
<div style="left:891px;top:621px;width:12px;height:12px;border:1px solid #C8C9DA;background:#fff"><svg width="14" height="14" style="position:absolute;left:-1px;top:-1px"><path d="M3.3 6.2 L6 9.6 L10.7 4.1" fill="none" stroke="#000" stroke-width="1.45"/></svg></div>
<div style="left:941px;top:621px;width:12px;height:12px;border:1px solid #C8C9DA;background:#fff"><svg width="14" height="14" style="position:absolute;left:-1px;top:-1px"><path d="M3.3 6.2 L6 9.6 L10.7 4.1" fill="none" stroke="#000" stroke-width="1.45"/></svg></div>
<div style="left:991px;top:621px;width:12px;height:12px;border:1px solid #C8C9DA;background:#fff"><svg width="14" height="14" style="position:absolute;left:-1px;top:-1px"><path d="M3.3 6.2 L6 9.6 L10.7 4.1" fill="none" stroke="#000" stroke-width="1.45"/></svg></div>
<div style="left:1041px;top:621px;width:12px;height:12px;border:1px solid #C8C9DA;background:#fff"><svg width="14" height="14" style="position:absolute;left:-1px;top:-1px"><path d="M3.3 6.2 L6 9.6 L10.7 4.1" fill="none" stroke="#000" stroke-width="1.45"/></svg></div>
<div style="left:12px;top:639px;width:24px;height:20px;background:#F3F3F6"></div>
<div style="left:11px;top:659px;width:26px;height:1px;background:#CFD0DE"></div>
<div style="left:67px;top:659px;width:1006px;height:1px;background:#CFD0DE"></div>
<div style="left:91px;top:639px;width:1px;height:21px;background:#CFD0DE"></div>
<div style="left:872px;top:639px;width:1px;height:21px;background:#CFD0DE"></div>
<div style="left:922px;top:639px;width:1px;height:21px;background:#CFD0DE"></div>
<div style="left:972px;top:639px;width:1px;height:21px;background:#CFD0DE"></div>
<div style="left:1022px;top:639px;width:1px;height:21px;background:#CFD0DE"></div>
<div style="left:1073px;top:639px;width:1px;height:21px;background:#CFD0DE"></div>
<div style="left:72px;top:642px;width:12px;height:12px;border:1px solid #C8C9DA;background:#fff"></div>
<div class="t" style="left:96.60px;top:644px;font-size:12.5px;font-weight:400;color:#111;transform:scaleX(0.9500);">Vendor Prepayment</div>
<div style="left:891px;top:642px;width:12px;height:12px;border:1px solid #C8C9DA;background:#fff"><svg width="14" height="14" style="position:absolute;left:-1px;top:-1px"><path d="M3.3 6.2 L6 9.6 L10.7 4.1" fill="none" stroke="#000" stroke-width="1.45"/></svg></div>
<div style="left:941px;top:642px;width:12px;height:12px;border:1px solid #C8C9DA;background:#fff"><svg width="14" height="14" style="position:absolute;left:-1px;top:-1px"><path d="M3.3 6.2 L6 9.6 L10.7 4.1" fill="none" stroke="#000" stroke-width="1.45"/></svg></div>
<div style="left:991px;top:642px;width:12px;height:12px;border:1px solid #C8C9DA;background:#fff"><svg width="14" height="14" style="position:absolute;left:-1px;top:-1px"><path d="M3.3 6.2 L6 9.6 L10.7 4.1" fill="none" stroke="#000" stroke-width="1.45"/></svg></div>
<div style="left:1041px;top:642px;width:12px;height:12px;border:1px solid #C8C9DA;background:#fff"><svg width="14" height="14" style="position:absolute;left:-1px;top:-1px"><path d="M3.3 6.2 L6 9.6 L10.7 4.1" fill="none" stroke="#000" stroke-width="1.45"/></svg></div>
<div style="left:11px;top:690px;width:26px;height:1px;background:#CFD0DE"></div>
<div style="left:36px;top:690px;width:1037px;height:1px;background:#CFD0DE"></div>
<div style="left:12px;top:660px;width:24px;height:30px;background:#F3F3F6"></div>
<svg style="position:absolute;left:56px;top:671px" width="8" height="8"><path d="M1 7 L7 7 L7 1 Z" fill="#000"/></svg>
<div style="left:71px;top:669px;width:12px;height:12px;border:1px solid #C8C9DA;background:#fff"></div>
<div class="t" style="left:88.40px;top:671px;font-size:12.5px;font-weight:700;color:#111;transform:scaleX(0.9475);">Group: Inventory</div>
<div style="left:67px;top:691px;width:1006px;height:20px;background:#EEEEEF"></div>
<div style="left:12px;top:691px;width:24px;height:20px;background:#F3F3F6"></div>
<div style="left:11px;top:711px;width:26px;height:1px;background:#CFD0DE"></div>
<div style="left:67px;top:711px;width:1006px;height:1px;background:#CFD0DE"></div>
<div style="left:91px;top:691px;width:1px;height:21px;background:#CFD0DE"></div>
<div style="left:872px;top:691px;width:1px;height:21px;background:#CFD0DE"></div>
<div style="left:922px;top:691px;width:1px;height:21px;background:#CFD0DE"></div>
<div style="left:972px;top:691px;width:1px;height:21px;background:#CFD0DE"></div>
<div style="left:1022px;top:691px;width:1px;height:21px;background:#CFD0DE"></div>
<div style="left:1073px;top:691px;width:1px;height:21px;background:#CFD0DE"></div>
<div style="left:72px;top:694px;width:12px;height:12px;border:1px solid #C8C9DA;background:#fff"></div>
<div class="t" style="left:95.65px;top:696px;font-size:12.5px;font-weight:400;color:#111;transform:scaleX(0.9500);">Default Warehouse</div>
<div style="left:891px;top:694px;width:12px;height:12px;border:1px solid #C8C9DA;background:#fff"></div>
<div style="left:941px;top:694px;width:12px;height:12px;border:1px solid #C8C9DA;background:#fff"></div>
<div style="left:991px;top:694px;width:12px;height:12px;border:1px solid #C8C9DA;background:#fff"></div>
<div style="left:1041px;top:694px;width:12px;height:12px;border:1px solid #C8C9DA;background:#fff"></div>
<div style="left:12px;top:712px;width:24px;height:20px;background:#F3F3F6"></div>
<div style="left:11px;top:732px;width:26px;height:1px;background:#CFD0DE"></div>
<div style="left:67px;top:732px;width:1006px;height:1px;background:#CFD0DE"></div>
<div style="left:91px;top:712px;width:1px;height:21px;background:#CFD0DE"></div>
<div style="left:872px;top:712px;width:1px;height:21px;background:#CFD0DE"></div>
<div style="left:922px;top:712px;width:1px;height:21px;background:#CFD0DE"></div>
<div style="left:972px;top:712px;width:1px;height:21px;background:#CFD0DE"></div>
<div style="left:1022px;top:712px;width:1px;height:21px;background:#CFD0DE"></div>
<div style="left:1073px;top:712px;width:1px;height:21px;background:#CFD0DE"></div>
<div style="left:72px;top:715px;width:12px;height:12px;border:1px solid #C8C9DA;background:#fff"></div>
<div class="t" style="left:95.65px;top:717px;font-size:12.5px;font-weight:400;color:#111;transform:scaleX(0.9500);">Inventory</div>
<div style="left:891px;top:715px;width:12px;height:12px;border:1px solid #C8C9DA;background:#fff"></div>
<div style="left:941px;top:715px;width:12px;height:12px;border:1px solid #C8C9DA;background:#fff"></div>
<div style="left:991px;top:715px;width:12px;height:12px;border:1px solid #C8C9DA;background:#fff"></div>
<div style="left:1041px;top:715px;width:12px;height:12px;border:1px solid #C8C9DA;background:#fff"></div>
<div style="left:67px;top:733px;width:1006px;height:20px;background:#EEEEEF"></div>
<div style="left:12px;top:733px;width:24px;height:20px;background:#F3F3F6"></div>
<div style="left:11px;top:753px;width:26px;height:1px;background:#CFD0DE"></div>
<div style="left:67px;top:753px;width:1006px;height:1px;background:#CFD0DE"></div>
<div style="left:91px;top:733px;width:1px;height:21px;background:#CFD0DE"></div>
<div style="left:872px;top:733px;width:1px;height:21px;background:#CFD0DE"></div>
<div style="left:922px;top:733px;width:1px;height:21px;background:#CFD0DE"></div>
<div style="left:972px;top:733px;width:1px;height:21px;background:#CFD0DE"></div>
<div style="left:1022px;top:733px;width:1px;height:21px;background:#CFD0DE"></div>
<div style="left:1073px;top:733px;width:1px;height:21px;background:#CFD0DE"></div>
<div style="left:72px;top:736px;width:12px;height:12px;border:1px solid #C8C9DA;background:#fff"></div>
<div class="t" style="left:95.65px;top:738px;font-size:12.5px;font-weight:400;color:#111;transform:scaleX(0.9500);">Inventory Adjustment</div>
<div style="left:891px;top:736px;width:12px;height:12px;border:1px solid #C8C9DA;background:#fff"></div>
<div style="left:941px;top:736px;width:12px;height:12px;border:1px solid #C8C9DA;background:#fff"></div>
<div style="left:991px;top:736px;width:12px;height:12px;border:1px solid #C8C9DA;background:#fff"></div>
<div style="left:1041px;top:736px;width:12px;height:12px;border:1px solid #C8C9DA;background:#fff"></div>
<div style="left:12px;top:754px;width:24px;height:20px;background:#F3F3F6"></div>
<div style="left:11px;top:774px;width:26px;height:1px;background:#CFD0DE"></div>
<div style="left:67px;top:774px;width:1006px;height:1px;background:#CFD0DE"></div>
<div style="left:91px;top:754px;width:1px;height:21px;background:#CFD0DE"></div>
<div style="left:872px;top:754px;width:1px;height:21px;background:#CFD0DE"></div>
<div style="left:922px;top:754px;width:1px;height:21px;background:#CFD0DE"></div>
<div style="left:972px;top:754px;width:1px;height:21px;background:#CFD0DE"></div>
<div style="left:1022px;top:754px;width:1px;height:21px;background:#CFD0DE"></div>
<div style="left:1073px;top:754px;width:1px;height:21px;background:#CFD0DE"></div>
<div style="left:72px;top:757px;width:12px;height:12px;border:1px solid #C8C9DA;background:#fff"></div>
<div class="t" style="left:95.65px;top:759px;font-size:12.5px;font-weight:400;color:#111;transform:scaleX(0.9500);">Inventory Build</div>
<div style="left:891px;top:757px;width:12px;height:12px;border:1px solid #C8C9DA;background:#fff"></div>
<div style="left:941px;top:757px;width:12px;height:12px;border:1px solid #C8C9DA;background:#fff"></div>
<div style="left:991px;top:757px;width:12px;height:12px;border:1px solid #C8C9DA;background:#fff"></div>
<div style="left:1041px;top:757px;width:12px;height:12px;border:1px solid #C8C9DA;background:#fff"></div>
<div style="left:36px;top:147px;width:1px;height:623px;background:#CFD0DE"></div>
<div style="left:1073px;top:147px;width:1px;height:623px;background:#CFD0DE"></div>
<div style="left:37px;top:147px;width:1036px;height:1px;background:repeating-linear-gradient(to right,#56A6E2 0 2px,transparent 2px 3px)"></div>
<div style="left:37px;top:177px;width:1036px;height:1px;background:repeating-linear-gradient(to right,#56A6E2 0 2px,transparent 2px 3px)"></div>
<div style="left:37px;top:147px;width:1px;height:31px;background:repeating-linear-gradient(to bottom,#56A6E2 0 2px,transparent 2px 3px)"></div>
<div style="left:1072px;top:147px;width:1px;height:31px;background:repeating-linear-gradient(to bottom,#56A6E2 0 2px,transparent 2px 3px)"></div>
<div style="left:1111px;top:96px;width:719px;height:21px;background:#F3F3F6"></div>
<div style="left:1111px;top:96px;width:720px;height:1px;background:#CFD0DE"></div>
<div style="left:1111px;top:117px;width:720px;height:1px;background:#CFD0DE"></div>
<div style="left:1111px;top:146px;width:720px;height:1px;background:#CFD0DE"></div>
<div style="left:1136px;top:96px;width:1px;height:51px;background:#CFD0DE"></div>
<div style="left:1762px;top:96px;width:1px;height:51px;background:#CFD0DE"></div>
<div style="left:1813px;top:96px;width:1px;height:51px;background:#CFD0DE"></div>
<div style="left:1111px;top:96px;width:1px;height:674px;background:#CFD0DE"></div>
<div style="left:1830px;top:96px;width:1px;height:674px;background:#CFD0DE"></div>
<div class="t" style="left:1140.98px;top:102px;font-size:12.5px;font-weight:400;color:#111;transform:scaleX(0.9217);">Permission</div>
<div class="t" style="left:1767.01px;top:102px;font-size:12.5px;font-weight:400;color:#111;transform:scaleX(0.8947);">Enable</div>
<div style="left:1111px;top:117px;width:22px;height:26px;border:2px solid #C9CADA;background:#F3F3F6"><svg width="22" height="26" style="position:absolute;left:0;top:0"><path d="M4.4 7 H14.2 L11 12.6 V19.4 L8.5 17.2 V12.6 Z" fill="none" stroke="#000" stroke-width="1.6" stroke-linejoin="round"/><path d="M13.4 15.3 L18.8 20.6 M18.8 15.3 L13.4 20.6" stroke="#000" stroke-width="1.7"/></svg></div>
<div style="left:1781px;top:125px;width:12px;height:12px;border:1px solid #C8C9DA;background:#fff"><div style="left:2px;top:2px;width:8px;height:8px;background:#1E1E1E"></div></div>
<div style="left:1814px;top:147px;width:16px;height:623px;background:#F3F3F6"></div>
<div style="left:1813px;top:147px;width:1px;height:623px;background:#CFD0DE"></div>
<svg style="position:absolute;left:1818px;top:153px" width="8" height="4"><path d="M0 4 L4.0 0 L8 4 Z" fill="#000"/></svg>
<svg style="position:absolute;left:1818px;top:760px" width="8" height="4"><path d="M0 0 L4.0 4 L8 0 Z" fill="#000"/></svg>
<div style="left:1112px;top:147px;width:24px;height:20px;background:#F3F3F6"></div>
<div style="left:1111px;top:167px;width:702px;height:1px;background:#CFD0DE"></div>
<div style="left:1136px;top:147px;width:1px;height:21px;background:#CFD0DE"></div>
<div style="left:1762px;top:147px;width:1px;height:21px;background:#CFD0DE"></div>
<div class="t" style="left:1141.30px;top:152px;font-size:12.5px;font-weight:400;color:#111;transform:scaleX(0.9777);">Allow auto-applying credits</div>
<div style="left:1781px;top:150px;width:12px;height:12px;border:1px solid #C8C9DA;background:#fff"></div>
<div style="left:1137px;top:168px;width:676px;height:20px;background:#EEEEEF"></div>
<div style="left:1112px;top:168px;width:24px;height:20px;background:#F3F3F6"></div>
<div style="left:1111px;top:188px;width:702px;height:1px;background:#CFD0DE"></div>
<div style="left:1136px;top:168px;width:1px;height:21px;background:#CFD0DE"></div>
<div style="left:1762px;top:168px;width:1px;height:21px;background:#CFD0DE"></div>
<div class="t" style="left:1141.30px;top:173px;font-size:12.5px;font-weight:400;color:#111;transform:scaleX(0.9670);">Allow batch order conversion</div>
<div style="left:1781px;top:171px;width:12px;height:12px;border:1px solid #C8C9DA;background:#fff"></div>
<div style="left:1112px;top:189px;width:24px;height:20px;background:#F3F3F6"></div>
<div style="left:1111px;top:209px;width:702px;height:1px;background:#CFD0DE"></div>
<div style="left:1136px;top:189px;width:1px;height:21px;background:#CFD0DE"></div>
<div style="left:1762px;top:189px;width:1px;height:21px;background:#CFD0DE"></div>
<div class="t" style="left:1141.30px;top:194px;font-size:12.5px;font-weight:400;color:#111;transform:scaleX(0.9513);">Allow clearing locks on orders and invoices</div>
<div style="left:1781px;top:192px;width:12px;height:12px;border:1px solid #C8C9DA;background:#fff"></div>
<div style="left:1137px;top:210px;width:676px;height:20px;background:#EEEEEF"></div>
<div style="left:1112px;top:210px;width:24px;height:20px;background:#F3F3F6"></div>
<div style="left:1111px;top:230px;width:702px;height:1px;background:#CFD0DE"></div>
<div style="left:1136px;top:210px;width:1px;height:21px;background:#CFD0DE"></div>
<div style="left:1762px;top:210px;width:1px;height:21px;background:#CFD0DE"></div>
<div class="t" style="left:1141.30px;top:215px;font-size:12.5px;font-weight:400;color:#111;transform:scaleX(0.9670);">Allow editing commission on orders and invoices</div>
<div style="left:1781px;top:213px;width:12px;height:12px;border:1px solid #C8C9DA;background:#fff"></div>
<div style="left:1112px;top:231px;width:24px;height:20px;background:#F3F3F6"></div>
<div style="left:1111px;top:251px;width:702px;height:1px;background:#CFD0DE"></div>
<div style="left:1136px;top:231px;width:1px;height:21px;background:#CFD0DE"></div>
<div style="left:1762px;top:231px;width:1px;height:21px;background:#CFD0DE"></div>
<div class="t" style="left:1141.30px;top:236px;font-size:12.5px;font-weight:400;color:#111;transform:scaleX(0.9528);">Allow creating purchase invoices from job transfers</div>
<div style="left:1781px;top:234px;width:12px;height:12px;border:1px solid #C8C9DA;background:#fff"><svg width="14" height="14" style="position:absolute;left:-1px;top:-1px"><path d="M3.3 6.2 L6 9.6 L10.7 4.1" fill="none" stroke="#000" stroke-width="1.45"/></svg></div>
<div style="left:1137px;top:252px;width:676px;height:20px;background:#EEEEEF"></div>
<div style="left:1112px;top:252px;width:24px;height:20px;background:#F3F3F6"></div>
<div style="left:1111px;top:272px;width:702px;height:1px;background:#CFD0DE"></div>
<div style="left:1136px;top:252px;width:1px;height:21px;background:#CFD0DE"></div>
<div style="left:1762px;top:252px;width:1px;height:21px;background:#CFD0DE"></div>
<div class="t" style="left:1141.30px;top:257px;font-size:12.5px;font-weight:400;color:#111;transform:scaleX(0.9670);">Allow overriding customer credit holds</div>
<div style="left:1781px;top:255px;width:12px;height:12px;border:1px solid #C8C9DA;background:#fff"><svg width="14" height="14" style="position:absolute;left:-1px;top:-1px"><path d="M3.3 6.2 L6 9.6 L10.7 4.1" fill="none" stroke="#000" stroke-width="1.45"/></svg></div>
<div style="left:1112px;top:273px;width:24px;height:20px;background:#F3F3F6"></div>
<div style="left:1111px;top:293px;width:702px;height:1px;background:#CFD0DE"></div>
<div style="left:1136px;top:273px;width:1px;height:21px;background:#CFD0DE"></div>
<div style="left:1762px;top:273px;width:1px;height:21px;background:#CFD0DE"></div>
<div class="t" style="left:1141.30px;top:278px;font-size:12.5px;font-weight:400;color:#111;transform:scaleX(0.9670);">Allow editing customer and vendor detail</div>
<div style="left:1781px;top:276px;width:12px;height:12px;border:1px solid #C8C9DA;background:#fff"></div>
<div style="left:1137px;top:294px;width:676px;height:20px;background:#EEEEEF"></div>
<div style="left:1112px;top:294px;width:24px;height:20px;background:#F3F3F6"></div>
<div style="left:1111px;top:314px;width:702px;height:1px;background:#CFD0DE"></div>
<div style="left:1136px;top:294px;width:1px;height:21px;background:#CFD0DE"></div>
<div style="left:1762px;top:294px;width:1px;height:21px;background:#CFD0DE"></div>
<div class="t" style="left:1141.30px;top:299px;font-size:12.5px;font-weight:400;color:#111;transform:scaleX(0.9670);">Allow editing item/customer/vendor IDs or types</div>
<div style="left:1781px;top:297px;width:12px;height:12px;border:1px solid #C8C9DA;background:#fff"></div>
<div style="left:1112px;top:315px;width:24px;height:20px;background:#F3F3F6"></div>
<div style="left:1111px;top:335px;width:702px;height:1px;background:#CFD0DE"></div>
<div style="left:1136px;top:315px;width:1px;height:21px;background:#CFD0DE"></div>
<div style="left:1762px;top:315px;width:1px;height:21px;background:#CFD0DE"></div>
<div class="t" style="left:1141.30px;top:320px;font-size:12.5px;font-weight:400;color:#111;transform:scaleX(0.9670);">Allow job unposting</div>
<div style="left:1781px;top:318px;width:12px;height:12px;border:1px solid #C8C9DA;background:#fff"></div>
<div style="left:1137px;top:336px;width:676px;height:20px;background:#EEEEEF"></div>
<div style="left:1112px;top:336px;width:24px;height:20px;background:#F3F3F6"></div>
<div style="left:1111px;top:356px;width:702px;height:1px;background:#CFD0DE"></div>
<div style="left:1136px;top:336px;width:1px;height:21px;background:#CFD0DE"></div>
<div style="left:1762px;top:336px;width:1px;height:21px;background:#CFD0DE"></div>
<div class="t" style="left:1141.30px;top:341px;font-size:12.5px;font-weight:400;color:#111;transform:scaleX(0.9670);">Allow converting orders to RFQs or POs</div>
<div style="left:1781px;top:339px;width:12px;height:12px;border:1px solid #C8C9DA;background:#fff"></div>
<div style="left:1112px;top:357px;width:24px;height:20px;background:#F3F3F6"></div>
<div style="left:1111px;top:377px;width:702px;height:1px;background:#CFD0DE"></div>
<div style="left:1136px;top:357px;width:1px;height:21px;background:#CFD0DE"></div>
<div style="left:1762px;top:357px;width:1px;height:21px;background:#CFD0DE"></div>
<div class="t" style="left:1141.30px;top:362px;font-size:12.5px;font-weight:400;color:#111;transform:scaleX(0.9670);">Allow editing pricing or discounts in orders and invoices</div>
<div style="left:1781px;top:360px;width:12px;height:12px;border:1px solid #C8C9DA;background:#fff"></div>
<div style="left:1137px;top:378px;width:676px;height:20px;background:#EEEEEF"></div>
<div style="left:1112px;top:378px;width:24px;height:20px;background:#F3F3F6"></div>
<div style="left:1111px;top:398px;width:702px;height:1px;background:#CFD0DE"></div>
<div style="left:1136px;top:378px;width:1px;height:21px;background:#CFD0DE"></div>
<div style="left:1762px;top:378px;width:1px;height:21px;background:#CFD0DE"></div>
<div class="t" style="left:1141.30px;top:383px;font-size:12.5px;font-weight:400;color:#111;transform:scaleX(0.9670);">Allow adding/removing bundles in production</div>
<div style="left:1781px;top:381px;width:12px;height:12px;border:1px solid #C8C9DA;background:#fff"></div>
<div style="left:1112px;top:399px;width:24px;height:20px;background:#F3F3F6"></div>
<div style="left:1111px;top:419px;width:702px;height:1px;background:#CFD0DE"></div>
<div style="left:1136px;top:399px;width:1px;height:21px;background:#CFD0DE"></div>
<div style="left:1762px;top:399px;width:1px;height:21px;background:#CFD0DE"></div>
<div class="t" style="left:1141.30px;top:404px;font-size:12.5px;font-weight:400;color:#111;transform:scaleX(0.9670);">Allow converting quotes to invoices</div>
<div style="left:1781px;top:402px;width:12px;height:12px;border:1px solid #C8C9DA;background:#fff"></div>
<div style="left:1137px;top:420px;width:676px;height:20px;background:#EEEEEF"></div>
<div style="left:1112px;top:420px;width:24px;height:20px;background:#F3F3F6"></div>
<div style="left:1111px;top:440px;width:702px;height:1px;background:#CFD0DE"></div>
<div style="left:1136px;top:420px;width:1px;height:21px;background:#CFD0DE"></div>
<div style="left:1762px;top:420px;width:1px;height:21px;background:#CFD0DE"></div>
<div class="t" style="left:1141.30px;top:425px;font-size:12.5px;font-weight:400;color:#111;transform:scaleX(0.9670);">Allow releasing orders to manufacturing</div>
<div style="left:1781px;top:423px;width:12px;height:12px;border:1px solid #C8C9DA;background:#fff"></div>
<div style="left:1112px;top:441px;width:24px;height:20px;background:#F3F3F6"></div>
<div style="left:1111px;top:461px;width:702px;height:1px;background:#CFD0DE"></div>
<div style="left:1136px;top:441px;width:1px;height:21px;background:#CFD0DE"></div>
<div style="left:1762px;top:441px;width:1px;height:21px;background:#CFD0DE"></div>
<div class="t" style="left:1141.30px;top:446px;font-size:12.5px;font-weight:400;color:#111;transform:scaleX(0.9670);">Allow access to report settings</div>
<div style="left:1781px;top:444px;width:12px;height:12px;border:1px solid #C8C9DA;background:#fff"></div>
<div style="left:1137px;top:462px;width:676px;height:20px;background:#EEEEEF"></div>
<div style="left:1112px;top:462px;width:24px;height:20px;background:#F3F3F6"></div>
<div style="left:1111px;top:482px;width:702px;height:1px;background:#CFD0DE"></div>
<div style="left:1136px;top:462px;width:1px;height:21px;background:#CFD0DE"></div>
<div style="left:1762px;top:462px;width:1px;height:21px;background:#CFD0DE"></div>
<div class="t" style="left:1141.30px;top:467px;font-size:12.5px;font-weight:400;color:#111;transform:scaleX(0.9670);">Allow returning payments</div>
<div style="left:1781px;top:465px;width:12px;height:12px;border:1px solid #C8C9DA;background:#fff"></div>
<div style="left:1112px;top:483px;width:24px;height:20px;background:#F3F3F6"></div>
<div style="left:1111px;top:503px;width:702px;height:1px;background:#CFD0DE"></div>
<div style="left:1136px;top:483px;width:1px;height:21px;background:#CFD0DE"></div>
<div style="left:1762px;top:483px;width:1px;height:21px;background:#CFD0DE"></div>
<div class="t" style="left:1141.30px;top:488px;font-size:12.5px;font-weight:400;color:#111;transform:scaleX(0.9670);">Allow AR tax settings in quotes/orders/invoices</div>
<div style="left:1781px;top:486px;width:12px;height:12px;border:1px solid #C8C9DA;background:#fff"><svg width="14" height="14" style="position:absolute;left:-1px;top:-1px"><path d="M3.3 6.2 L6 9.6 L10.7 4.1" fill="none" stroke="#000" stroke-width="1.45"/></svg></div>
<div style="left:1137px;top:504px;width:676px;height:20px;background:#EEEEEF"></div>
<div style="left:1112px;top:504px;width:24px;height:20px;background:#F3F3F6"></div>
<div style="left:1111px;top:524px;width:702px;height:1px;background:#CFD0DE"></div>
<div style="left:1136px;top:504px;width:1px;height:21px;background:#CFD0DE"></div>
<div style="left:1762px;top:504px;width:1px;height:21px;background:#CFD0DE"></div>
<div class="t" style="left:1141.30px;top:509px;font-size:12.5px;font-weight:400;color:#111;transform:scaleX(0.9670);">Allow unposting</div>
<div style="left:1781px;top:507px;width:12px;height:12px;border:1px solid #C8C9DA;background:#fff"><svg width="14" height="14" style="position:absolute;left:-1px;top:-1px"><path d="M3.3 6.2 L6 9.6 L10.7 4.1" fill="none" stroke="#000" stroke-width="1.45"/></svg></div>
<div style="left:1112px;top:525px;width:24px;height:20px;background:#F3F3F6"></div>
<div style="left:1111px;top:545px;width:702px;height:1px;background:#CFD0DE"></div>
<div style="left:1136px;top:525px;width:1px;height:21px;background:#CFD0DE"></div>
<div style="left:1762px;top:525px;width:1px;height:21px;background:#CFD0DE"></div>
<div class="t" style="left:1141.30px;top:530px;font-size:12.5px;font-weight:400;color:#111;transform:scaleX(0.9670);">Allow canceling/voiding transactions</div>
<div style="left:1781px;top:528px;width:12px;height:12px;border:1px solid #C8C9DA;background:#fff"></div>
<div style="left:1137px;top:546px;width:676px;height:20px;background:#EEEEEF"></div>
<div style="left:1112px;top:546px;width:24px;height:20px;background:#F3F3F6"></div>
<div style="left:1111px;top:566px;width:702px;height:1px;background:#CFD0DE"></div>
<div style="left:1136px;top:546px;width:1px;height:21px;background:#CFD0DE"></div>
<div style="left:1762px;top:546px;width:1px;height:21px;background:#CFD0DE"></div>
<div class="t" style="left:1141.30px;top:551px;font-size:12.5px;font-weight:400;color:#111;transform:scaleX(0.9670);">AllowSalesTaxCode</div>
<div style="left:1781px;top:549px;width:12px;height:12px;border:1px solid #C8C9DA;background:#fff"></div>
</body></html>
